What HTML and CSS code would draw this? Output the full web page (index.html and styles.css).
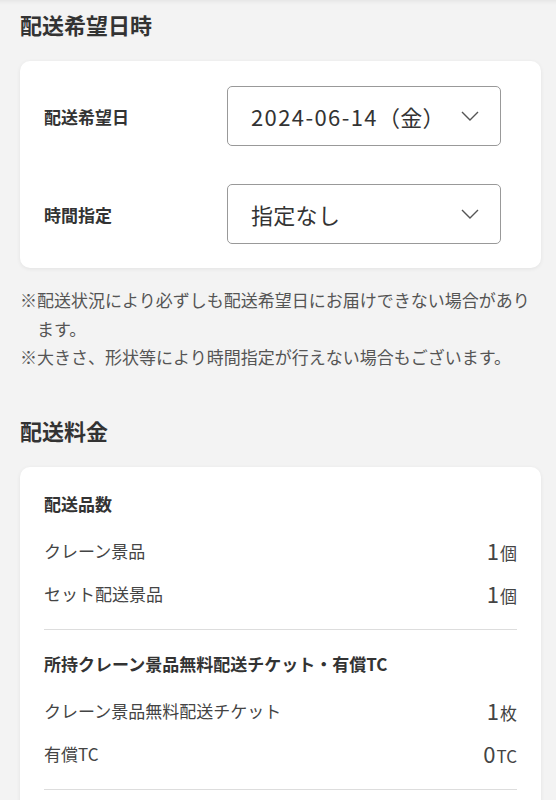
FILE: index.html
```html
<!DOCTYPE html>
<html lang="ja">
<head>
    <meta charset="UTF-8">
    <meta name="viewport" content="width=device-width, initial-scale=1.0">
    <title>配送希望日時</title>
    <link rel="stylesheet" href="styles.css">
</head>
<body>
    <div class="page">
        <!-- 配送希望日時 -->
        <section class="section">
            <h2 class="section-title">配送希望日時</h2>
            <div class="card date-card">
                <div class="form-row">
                    <label class="form-label" for="deliveryDate">配送希望日</label>
                    <div class="select">
                        <span class="select-value" id="deliveryDate"><span class="num">2024-06-14</span>（金）</span>
                        <svg class="chevron" viewBox="0 0 18 10" width="18" height="10">
                            <path d="M1 1 L9 9 L17 1" fill="none" stroke="#555" stroke-width="1.4"/>
                        </svg>
                    </div>
                </div>
                <div class="form-row">
                    <label class="form-label" for="deliveryTime">時間指定</label>
                    <div class="select">
                        <span class="select-value" id="deliveryTime">指定なし</span>
                        <svg class="chevron" viewBox="0 0 18 10" width="18" height="10">
                            <path d="M1 1 L9 9 L17 1" fill="none" stroke="#555" stroke-width="1.4"/>
                        </svg>
                    </div>
                </div>
            </div>
            <ul class="notes">
                <li>※配送状況により必ずしも配送希望日にお届けできない場合があります。</li>
                <li>※大きさ、形状等により時間指定が行えない場合もございます。</li>
            </ul>
        </section>

        <!-- 配送料金 -->
        <section class="section">
            <h2 class="section-title">配送料金</h2>
            <div class="card fee-card">
                <div class="fee-group">
                    <h3 class="fee-title">配送品数</h3>
                    <div class="fee-row">
                        <span>クレーン景品</span>
                        <span class="fee-value"><b>1</b>個</span>
                    </div>
                    <div class="fee-row">
                        <span>セット配送景品</span>
                        <span class="fee-value"><b>1</b>個</span>
                    </div>
                </div>
                <div class="fee-group">
                    <h3 class="fee-title">所持クレーン景品無料配送チケット・有償TC</h3>
                    <div class="fee-row">
                        <span>クレーン景品無料配送チケット</span>
                        <span class="fee-value"><b>1</b>枚</span>
                    </div>
                    <div class="fee-row">
                        <span>有償TC</span>
                        <span class="fee-value"><b>0</b>TC</span>
                    </div>
                </div>
            </div>
        </section>
    </div>
</body>
</html>
```

FILE: styles.css
```css
* {
    margin: 0;
    padding: 0;
    box-sizing: border-box;
    font-family: "Noto Sans CJK JP", "Noto Sans", sans-serif;
}

body {
    background-color: #f3f3f3;
    color: #333;
}

.page {
    padding: 9px 15px 0 20px;
    box-shadow: inset 0 6px 5px -5px rgba(0, 0, 0, 0.08);
}

.section-title {
    font-size: 22px;
    line-height: 30px;
    font-weight: bold;
    color: #333;
    margin-bottom: 22px;
}

.card {
    background-color: #fff;
    border-radius: 10px;
    box-shadow: 0 1px 4px rgba(0, 0, 0, 0.07);
}

/* Date / time card */
.date-card {
    display: flex;
    flex-direction: column;
    gap: 38px;
    padding: 25px 40px 24px 24px;
}

.form-row {
    display: grid;
    grid-template-columns: 183px 1fr;
    align-items: center;
}

.form-label {
    font-size: 17px;
    font-weight: bold;
    color: #333;
}

.select {
    display: flex;
    align-items: center;
    justify-content: space-between;
    height: 60px;
    padding: 0 21px 0 23px;
    border: 1px solid #999;
    border-radius: 5px;
}

.select-value {
    font-size: 22px;
    color: #333;
    letter-spacing: 0.3px;
}

.select-value .num {
    letter-spacing: 1.4px;
}

.chevron {
    flex-shrink: 0;
}

.notes {
    list-style: none;
    margin-top: 18px;
    margin-bottom: 43px;
    padding-left: 17px;
    font-size: 17px;
    line-height: 28.5px;
    color: #555;
}

.notes li {
    text-indent: -17px;
}

/* Fee card */
.fee-card {
    padding: 0 24px 40px;
}

.fee-group {
    padding: 21px 0 14px;
    border-bottom: 1px solid #ddd;
}

.fee-group:first-child {
    padding-top: 24px;
}

.fee-title {
    font-size: 17px;
    line-height: 26px;
    font-weight: bold;
    color: #333;
    margin-bottom: 12px;
}

.fee-row {
    display: flex;
    justify-content: space-between;
    align-items: center;
    height: 43px;
    font-size: 17px;
    color: #444;
}

.fee-value {
    font-size: 17px;
    color: #444;
}

.fee-value b {
    font-weight: normal;
    font-size: 22px;
    margin-right: 1px;
}
```
